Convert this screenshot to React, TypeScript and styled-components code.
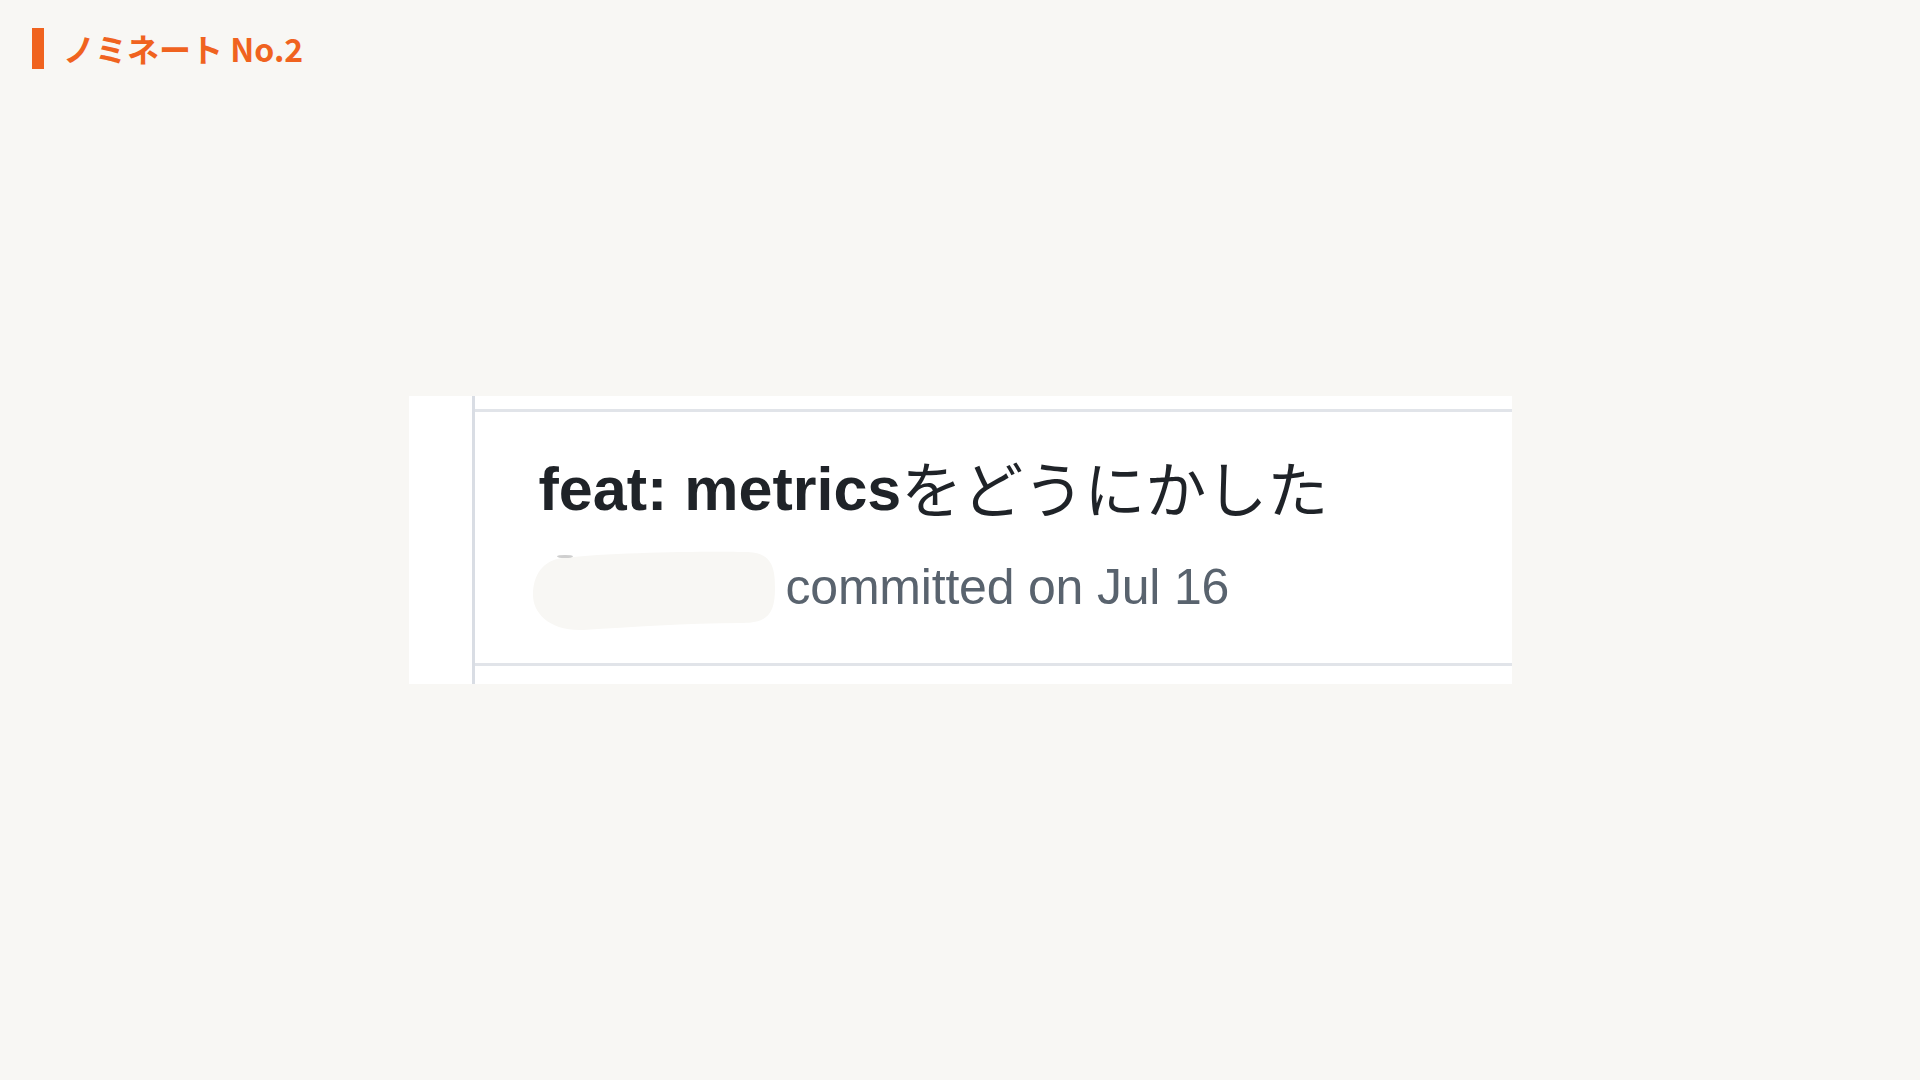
import React from "react";
import styled, { createGlobalStyle } from "styled-components";

const Global = createGlobalStyle`
  html, body { margin: 0; padding: 0; }
  body {
    background: #f8f7f4;
    font-family: "Liberation Sans", "Noto Sans CJK JP", sans-serif;
  }
`;

const Page = styled.div`
  min-height: 100vh;
  display: grid;
  grid-template-rows: 69px 1fr 69px;
`;

const Header = styled.header`
  display: flex;
  align-items: center;
  gap: 19px;
  padding: 28px 0 0 32px;
`;

const Bar = styled.span`
  display: block;
  width: 12px;
  height: 41px;
  background: #f0631f;
`;

const Heading = styled.h1`
  margin: 0;
  font-family: "Noto Sans CJK JP", sans-serif;
  font-weight: 700;
  font-size: 32px;
  line-height: 41px;
  color: #f0631f;
  letter-spacing: 0;
`;

const Center = styled.main`
  display: flex;
  align-items: center;
  justify-content: center;
`;

const Card = styled.section`
  display: flex;
  width: 1103px;
  height: 288px;
  background: #ffffff;
`;

const Gutter = styled.div`
  width: 63px;
  flex: none;
`;

const Rail = styled.div`
  width: 3px;
  flex: none;
  background: #d9dde4;
`;

const Body = styled.div`
  flex: 1;
  display: flex;
  flex-direction: column;
  padding: 13px 0 18px;
`;

const Entry = styled.div`
  flex: 1;
  border-top: 3px solid #e1e4e9;
  border-bottom: 3px solid #e1e4e9;
  padding: 39px 0 0 64px;
  display: flex;
  flex-direction: column;
`;

const Title = styled.div`
  font-size: 61px;
  line-height: 76px;
  height: 76px;
  color: #1f2328;
  white-space: nowrap;
`;

const Latin = styled.span`
  font-weight: 700;
  font-family: "Liberation Sans", sans-serif;
`;

const Kana = styled.span`
  font-weight: 400;
  font-family: "Noto Sans CJK JP", sans-serif;
  vertical-align: top;
  line-height: 76px;
  display: inline-block;
  transform: translateY(-2px);
`;

const Meta = styled.div`
  margin-top: 19px;
  display: flex;
  align-items: center;
  gap: 9px;
  margin-left: -6px;
`;

const Blob = styled.svg`
  display: block;
  flex: none;
  transform: translateY(4px);
`;

const Committed = styled.span`
  font-size: 50px;
  line-height: 60px;
  color: #59636e;
  white-space: nowrap;
  letter-spacing: -0.2px;
`;

export default function App() {
  return (
    <>
      <Global />
      <Page>
        <Header>
          <Bar />
          <Heading>ノミネート No.2</Heading>
        </Header>
        <Center>
          <Card>
            <Gutter />
            <Rail />
            <Body>
              <Entry>
                <Title>
                  <Latin>feat: metrics</Latin>
                  <Kana>をどうにかした</Kana>
                </Title>
                <Meta>
                  <Blob width="244" height="82" viewBox="0 0 244 82">
                    <path
                      d="M 30 8 C 80 2, 180 1, 215 2 C 240 3, 242 20, 242 38 C 242 62, 236 73, 210 73 C 150 73, 100 77, 50 80 C 15 81, 0 62, 0 45 C 0 25, 10 10, 30 8 Z"
                      fill="#f8f7f4"
                    />
                    <ellipse cx="32" cy="6.5" rx="8" ry="1.6" fill="#cfcfcf" />
                  </Blob>
                  <Committed>committed on Jul 16</Committed>
                </Meta>
              </Entry>
            </Body>
          </Card>
        </Center>
      </Page>
    </>
  );
}
